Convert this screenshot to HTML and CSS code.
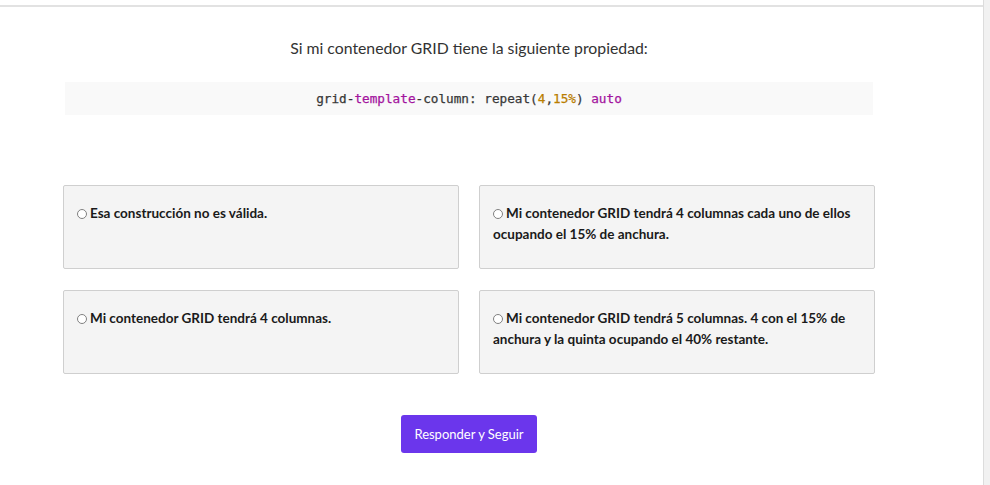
FILE: index.html
```html
<!DOCTYPE html>
<html lang="es">
<head>
<meta charset="utf-8">
<link rel="stylesheet" href="styles.css">
</head>
<body>
<div class="page">
  <main class="main">
    <div class="topbar"></div>
    <section class="quiz">
      <p class="question">Si mi contenedor GRID tiene la siguiente propiedad:</p>
      <pre class="code"><span class="c-d">grid</span>-<span class="c-k">template</span>-<span class="c-d">column: repeat(</span><span class="c-n">4</span><span class="c-d">,</span><span class="c-n">15%</span><span class="c-d">)</span> <span class="c-k">auto</span></pre>
      <div class="options">
        <label class="option"><span class="radio"></span>Esa construcción no es válida.</label>
        <label class="option"><span class="radio"></span>Mi contenedor GRID tendrá 4 columnas cada uno de ellos ocupando el 15% de anchura.</label>
        <label class="option"><span class="radio"></span>Mi contenedor GRID tendrá 4 columnas.</label>
        <label class="option"><span class="radio"></span>Mi contenedor GRID tendrá 5 columnas. 4 con el 15% de anchura y la quinta ocupando el 40% restante.</label>
      </div>
      <div class="actions">
        <button class="btn" type="button">Responder y Seguir</button>
      </div>
    </section>
  </main>
  <aside class="side"></aside>
</div>
</body>
</html>
```

FILE: styles.css
```css
* { box-sizing: border-box; }
html, body { margin: 0; padding: 0; }
body {
  font-family: Lato, "Open Sans", sans-serif;
  color: #222;
  background: #fff;
  height: 485px;
  overflow: hidden;
}
.page {
  display: flex;
  height: 485px;
}
.main {
  width: 984px;
  border-right: 1px solid #dcdcdc;
  background: #fff;
}
.side {
  flex: 1;
  background: #f1f1f1;
}
.topbar {
  height: 7px;
  border-bottom: 2px solid #e2e2e2;
}
.quiz {
  width: 812px;
  margin-left: 63px;
}
.question {
  margin: 31px 0 0;
  text-align: center;
  font-size: 15.8px;
  line-height: 20px;
  color: #333;
}
.code {
  margin: 24px 2px 0;
  height: 33px;
  background: #f9f9f9;
  text-align: center;
  font-family: "DejaVu Sans Mono", "Liberation Mono", monospace;
  font-size: 12.7px;
  line-height: 33px;
  font-weight: normal;
  color: #333;
  -webkit-text-stroke: 0.25px currentColor;
}
.code .c-d { color: #383838; }
.code .c-k { color: #a3139e; }
.code .c-n { color: #b97d00; }
.options {
  margin-top: 70px;
  display: grid;
  grid-template-columns: 1fr 1fr;
  column-gap: 20px;
  row-gap: 21px;
}
.option {
  display: block;
  height: 84px;
  background: #f4f4f4;
  border: 1px solid #cfcfcf;
  border-radius: 2px;
  padding: 17px 14px 0 13px;
  font-weight: bold;
  font-size: 13.5px;
  line-height: 21px;
  color: #1a1a1a;
}
.radio {
  display: inline-block;
  width: 10px;
  height: 10px;
  border: 1px solid #808080;
  border-radius: 50%;
  background: #fff;
  margin-right: 3px;
  vertical-align: -1px;
}
.actions {
  display: flex;
  justify-content: center;
  margin-top: 41px;
}
.btn {
  width: 136px;
  height: 38px;
  border: 0;
  border-radius: 3px;
  background: #6b36ec;
  color: #fff;
  font-family: Lato, sans-serif;
  font-size: 13px;
}
```
